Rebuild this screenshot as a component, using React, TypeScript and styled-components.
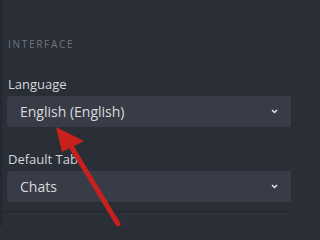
import styled, { createGlobalStyle } from 'styled-components';

const GlobalStyle = createGlobalStyle`
  html, body {
    margin: 0;
    padding: 0;
    background: #2a2e37;
    overflow: hidden;
  }
`;

const Panel = styled.div`
  position: relative;
  display: flex;
  flex-direction: column;

  width: 291px;
  height: 226px;
  box-sizing: border-box;
  padding: 37px 0 0 5px;

  background: #2a2e37;
  border-left: 2px solid #24272f;
  font-family: 'Open Sans', 'Noto Sans', sans-serif;
`;

const SectionTitle = styled.div`
  margin-left: 1px;

  font-size: 10px;
  line-height: 14px;
  letter-spacing: 1.7px;
  color: #70757f;
`;

const Field = styled.div<{ $gap: number }>`
  display: flex;
  flex-direction: column;

  margin-top: ${(p) => p.$gap}px;
`;

const Label = styled.div`
  margin-left: 1px;

  font-size: 13px;
  line-height: 18px;
  color: #d4d6da;
`;

const Select = styled.div`
  display: flex;
  align-items: center;
  justify-content: space-between;

  height: 31px;
  margin-top: 3px;
  padding: 0 13px 0 13px;

  background: #383c46;
  border-radius: 4px 0 0 4px;

  font-size: 14px;
  color: #d8dadd;
`;

const Chevron = () => (
  <svg width='7' height='5' viewBox='0 0 7 5'>
    <path d='M1 1 L3.5 3.5 L6 1' fill='none' stroke='#e4e6ea' strokeWidth='1.5' />
  </svg>
);

const Footer = styled.div`
  margin-top: 9px;
  flex: 1;
  margin-left: -5px;

  border-top: 1px solid #22252c;
  background: #2b2f38;
`;

// red annotation arrow drawn over the form
const Arrow = styled.svg`
  position: absolute;
  left: -2px;
  top: 0;
  pointer-events: none;
`;

const App = () => {
  return (
    <>
      <GlobalStyle />
      <Panel>
        <SectionTitle>INTERFACE</SectionTitle>
        <Field $gap={24}>
          <Label>Language</Label>
          <Select>
            <span>English (English)</span>
            <Chevron />
          </Select>
        </Field>
        <Field $gap={23}>
          <Label>Default Tab</Label>
          <Select>
            <span>Chats</span>
            <Chevron />
          </Select>
        </Field>
        <Footer />
        <Arrow width='291' height='226' viewBox='0 0 291 226'>
          <line x1='69' y1='143' x2='118' y2='224' stroke='#c8211d' strokeWidth='5' strokeLinecap='round' />
          <polygon points='56,127 84,141 62,152' fill='#c8211d' />
        </Arrow>
      </Panel>
    </>
  );
};

export default App;
